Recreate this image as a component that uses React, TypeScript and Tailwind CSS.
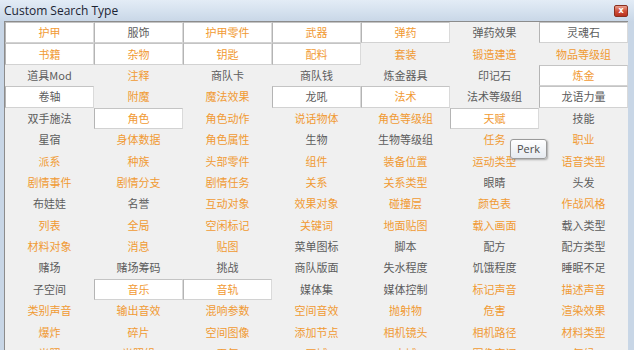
import React from "react";

type Cell = { t: string; o: boolean; w?: boolean };

const O = true;
const G = false;

const rows: [string, boolean, boolean?][][] = [
  [["护甲", O, true], ["服饰", G, true], ["护甲零件", O, true], ["武器", O, true], ["弹药", O, true], ["弹药效果", G], ["灵魂石", G, true]],
  [["书籍", O, true], ["杂物", O, true], ["钥匙", O, true], ["配料", O, true], ["套装", O], ["锻造建造", O], ["物品等级组", O]],
  [["道具Mod", G], ["注释", O], ["商队卡", G], ["商队钱", G], ["炼金器具", G], ["印记石", G], ["炼金", O, true]],
  [["卷轴", G, true], ["附魔", O], ["魔法效果", O], ["龙吼", G, true], ["法术", O, true], ["法术等级组", G], ["龙语力量", G, true]],
  [["双手施法", G], ["角色", O, true], ["角色动作", O], ["说话物体", O], ["角色等级组", O], ["天赋", O, true], ["技能", G]],
  [["星宿", G], ["身体数据", O], ["角色属性", O], ["生物", G], ["生物等级组", G], ["任务", O], ["职业", O]],
  [["派系", O], ["种族", O], ["头部零件", O], ["组件", O], ["装备位置", O], ["运动类型", O], ["语音类型", O]],
  [["剧情事件", O], ["剧情分支", O], ["剧情任务", O], ["关系", O], ["关系类型", O], ["眼睛", G], ["头发", G]],
  [["布娃娃", G], ["名誉", G], ["互动对象", O], ["效果对象", O], ["碰撞层", O], ["颜色表", O], ["作战风格", O]],
  [["列表", O], ["全局", O], ["空闲标记", O], ["关键词", O], ["地面贴图", O], ["载入画面", O], ["载入类型", G]],
  [["材料对象", O], ["消息", O], ["贴图", O], ["菜单图标", G], ["脚本", G], ["配方", G], ["配方类型", G]],
  [["赌场", G], ["赌场筹码", G], ["挑战", G], ["商队版面", G], ["失水程度", G], ["饥饿程度", G], ["睡眠不足", G]],
  [["子空间", G], ["音乐", O, true], ["音轨", O, true], ["媒体集", G], ["媒体控制", G], ["标记声音", O], ["描述声音", O]],
  [["类别声音", O], ["输出音效", O], ["混响参数", O], ["空间音效", O], ["抛射物", O], ["危害", O], ["渲染效果", O]],
  [["爆炸", O], ["碎片", O], ["空间图像", O], ["添加节点", O], ["相机镜头", O], ["相机路径", O], ["材料类型", O]],
  [["光照", O], ["光照组", O], ["天气", O], ["区域", O], ["水域", O], ["图像空间", O], ["气候", O]],
];

const cells: Cell[] = rows.flat().map(([t, o, w]) => ({ t, o, w: !!w }));

export default function App() {
  return (
    <div
      className="w-[634px] h-[350px] overflow-hidden flex flex-col bg-[#c8d6e6]"
      style={{ fontFamily: '"Noto Sans CJK SC", "Noto Sans", sans-serif' }}
    >
      <div className="h-[21px] shrink-0 flex items-center justify-between pl-[4px] pr-[6px] bg-gradient-to-b from-[#e3ecf6] via-[#d6e2ef] to-[#c9d7e7]">
        <span
          className="text-[12px] text-[#1c2433] leading-none"
          style={{ fontFamily: '"Open Sans", "Noto Sans", sans-serif' }}
        >
          Custom Search Type
        </span>
        <div className="w-[14px] h-[12px] rounded-[2px] bg-gradient-to-b from-[#e8a090] via-[#d0503a] to-[#b8301e] border border-[#8a3020] flex items-center justify-center">
          <span className="text-white text-[8px] leading-none font-bold" style={{ fontFamily: '"DejaVu Sans", sans-serif' }}>
            x
          </span>
        </div>
      </div>
      <div className="flex-1 flex pl-[4px] pr-[6px] min-h-0">
        <div className="flex-1 relative border-t border-l border-[#8c8c8c] bg-[#f0f0f0] pl-[0px] overflow-hidden">
          <div className="grid grid-cols-7 auto-rows-[21.4px]">
            {cells.map((c, i) => (
              <div
                key={i}
                className={
                  "flex items-center justify-center text-[11px] leading-none whitespace-nowrap " +
                  (c.o ? "text-[#f19a33] " : "text-[#5c5c5c] ") +
                  (c.w ? "bg-white border-l border-t border-l-[#b4b4b4] border-t-[#c4c4c4] border-r border-b border-r-[#dadada] border-b-[#d2d2d2]" : "")
                }
              >
                {c.t}
              </div>
            ))}
          </div>
          <div
            className="absolute left-[505px] top-[117px] px-[6px] h-[20px] flex items-center bg-gradient-to-b from-white to-[#e6eaf0] border border-[#9a9a9a] rounded-[3px] shadow-[1px_1px_2px_rgba(0,0,0,0.3)] text-[11px] text-[#4c4c4c]"
            style={{ fontFamily: '"Open Sans", "Noto Sans", sans-serif' }}
          >
            Perk
          </div>
        </div>
      </div>
    </div>
  );
}
